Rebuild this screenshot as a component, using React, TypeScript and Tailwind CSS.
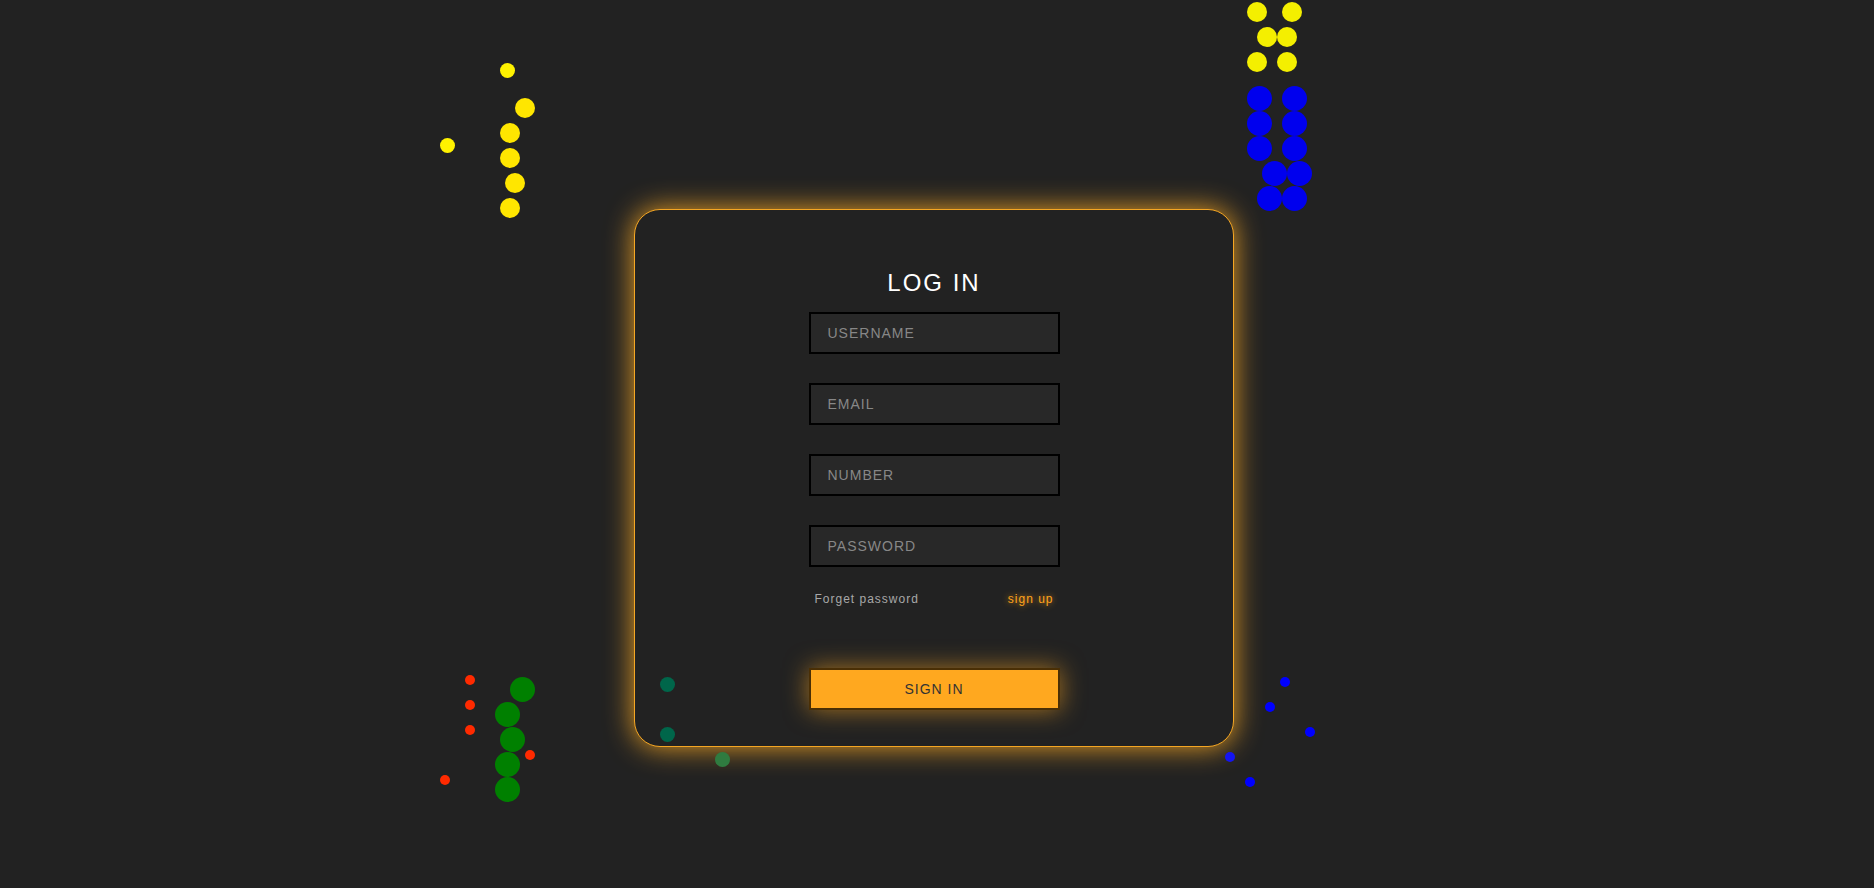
import React from "react"

const dots = [
  // yellow, left cluster
  "left-[499.5px] top-[62.5px] size-[15px] bg-[#fff200]",
  "left-[515px] top-[98px] size-[20px] bg-[#ffe600]",
  "left-[439.5px] top-[137.5px] size-[15px] bg-[#fff200]",
  "left-[500px] top-[123px] size-[20px] bg-[#ffe600]",
  "left-[500px] top-[148px] size-[20px] bg-[#ffe600]",
  "left-[505px] top-[173px] size-[20px] bg-[#ffe600]",
  "left-[500px] top-[198px] size-[20px] bg-[#ffe600]",
  // yellow, top right
  "left-[1247px] top-[2px] size-[20px] bg-[#f4ef00]",
  "left-[1282px] top-[2px] size-[20px] bg-[#f4ef00]",
  "left-[1257px] top-[27px] size-[20px] bg-[#f4ef00]",
  "left-[1277px] top-[27px] size-[20px] bg-[#f4ef00]",
  "left-[1247px] top-[52px] size-[20px] bg-[#f4ef00]",
  "left-[1277px] top-[52px] size-[20px] bg-[#f4ef00]",
  // blue, top right
  "left-[1247px] top-[86px] size-[25px] bg-[#0000ee]",
  "left-[1282px] top-[86px] size-[25px] bg-[#0000ee]",
  "left-[1247px] top-[111px] size-[25px] bg-[#0000ee]",
  "left-[1282px] top-[111px] size-[25px] bg-[#0000ee]",
  "left-[1247px] top-[136px] size-[25px] bg-[#0000ee]",
  "left-[1282px] top-[136px] size-[25px] bg-[#0000ee]",
  "left-[1262px] top-[161px] size-[25px] bg-[#0000ee]",
  "left-[1287px] top-[161px] size-[25px] bg-[#0000ee]",
  "left-[1257px] top-[186px] size-[25px] bg-[#0000ee]",
  "left-[1282px] top-[186px] size-[25px] bg-[#0000ee]",
  // red, bottom left
  "left-[465px] top-[675px] size-[10px] bg-[#ff2a00]",
  "left-[465px] top-[700px] size-[10px] bg-[#ff2a00]",
  "left-[465px] top-[725px] size-[10px] bg-[#ff2a00]",
  "left-[525px] top-[750px] size-[10px] bg-[#ff2a00]",
  "left-[440px] top-[775px] size-[10px] bg-[#ff2a00]",
  // green, bottom left
  "left-[510px] top-[677px] size-[25px] bg-[#008000]",
  "left-[495px] top-[702px] size-[25px] bg-[#008000]",
  "left-[500px] top-[727px] size-[25px] bg-[#008000]",
  "left-[495px] top-[752px] size-[25px] bg-[#008000]",
  "left-[495px] top-[777px] size-[25px] bg-[#008000]",
  // teal, card corner
  "left-[660px] top-[677px] size-[15px] bg-[#00664a]",
  "left-[660px] top-[727px] size-[15px] bg-[#00664a]",
  "left-[715px] top-[752px] size-[15px] bg-[#2f7b40]",
  // blue, bottom right
  "left-[1280px] top-[677px] size-[10px] bg-[#0000ff]",
  "left-[1265px] top-[702px] size-[10px] bg-[#0000ff]",
  "left-[1305px] top-[727px] size-[10px] bg-[#0000ff]",
  "left-[1225px] top-[752px] size-[10px] bg-[#1414f0]",
  "left-[1245px] top-[777px] size-[10px] bg-[#0000ff]",
]

const fields = ["USERNAME", "EMAIL", "NUMBER", "PASSWORD"]

export default function App() {
  return (
    <div
      className="relative min-h-screen w-full overflow-hidden bg-[#222222]"
      style={{ fontFamily: '"Liberation Sans", Arial, sans-serif' }}
    >
      <div className="flex justify-center pt-[209px] pr-[6px]">
        <div className="flex h-[538px] w-[600px] shrink-0 flex-col items-center rounded-[26px] border border-[#f5a623] bg-[#222222] pt-[58px] shadow-[0_0_28px_rgba(245,166,35,0.95)]">
          <h1 className="text-[24px] leading-[30px] tracking-[2px] text-white">LOG IN</h1>

          <form className="mt-[14px] flex flex-col items-center" onSubmit={(e) => e.preventDefault()}>
            <div className="flex flex-col gap-[29px]">
              {fields.map((f) => (
                <div key={f} className="w-[251px] border-2 border-black bg-[#282828]">
                  <input
                    type={f === "PASSWORD" ? "password" : "text"}
                    placeholder={f}
                    className="block h-[38px] w-full bg-transparent px-[17px] text-[14px] tracking-[1px] text-[#ccc] outline-none placeholder:text-[#878787]"
                  />
                </div>
              ))}
            </div>

            <div className="mt-[24px] flex w-[251px] items-center justify-between px-[6px] text-[12px] leading-[16px] tracking-[1px]">
              <a href="#" className="text-[#a8a8a8]">
                Forget password
              </a>
              <a href="#" className="text-[#ffa41c] [text-shadow:0_0_6px_rgba(255,164,28,0.8)]">
                sign up
              </a>
            </div>

            <div className="mt-[61px] w-[251px] border-2 border-[#4a2f05] bg-[#ffa81f] shadow-[0_0_24px_rgba(255,168,31,0.6)]">
              <button
                type="submit"
                className="block w-full text-center text-[14px] leading-[38px] tracking-[1px] text-[#333]"
              >
                SIGN IN
              </button>
            </div>
          </form>
        </div>
      </div>

      {dots.map((d, i) => (
        <span key={i} className={"absolute rounded-full " + d} />
      ))}
    </div>
  )
}
